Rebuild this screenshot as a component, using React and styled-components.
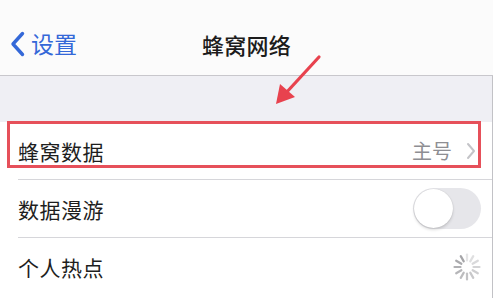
import React from 'react';
import styled, { createGlobalStyle } from 'styled-components';

const GlobalStyle = createGlobalStyle`
  html, body {
    margin: 0;
    padding: 0;
    background: #ffffff;
  }
  body {
    font-family: "Noto Sans CJK SC", "Noto Sans", sans-serif;
  }
`;

const Screen = styled.div`
  position: relative;
  width: 493px;
  height: 298px;
  overflow: hidden;
  background: #ffffff;
  display: flex;
  flex-direction: column;
`;

const NavBar = styled.div`
  height: 63px;
  padding-top: 12px;
  display: grid;
  grid-template-columns: 1fr auto 1fr;
  align-items: center;
  border-bottom: 1px solid #c8c7cc;
  background: #fbfbfb;
`;

const BackButton = styled.div`
  display: flex;
  align-items: center;
  gap: 6px;
  padding-left: 10px;
  color: #3468d8;
  font-size: 23px;
  line-height: 1;
`;

const Title = styled.div`
  font-size: 22px;
  font-weight: 500;
  color: #1c1c1c;
  letter-spacing: 0.3px;
`;

const Body = styled.div`
  flex: 1;
  display: flex;
  flex-direction: column;
  border-right: 1px solid #c2c2c6;
`;

const SectionGap = styled.div`
  height: 46px;
  background: #efeff4;
`;

const Row = styled.div`
  height: 58px;
  padding-left: 18px;
  display: flex;
  background: #ffffff;
`;

const RowInner = styled.div`
  flex: 1;
  display: flex;
  align-items: center;
  justify-content: space-between;
  padding-right: ${p => p.$pr || 12}px;
  border-bottom: ${p => (p.$last ? 'none' : '1px solid #d6d6da')};
`;

const Label = styled.div`
  font-size: 21px;
  color: #1e1e1e;
  letter-spacing: 0.5px;
`;

const Detail = styled.div`
  display: flex;
  align-items: center;
  gap: 14px;
  color: #8e8e93;
  font-size: 20px;
`;

const Toggle = styled.div`
  position: relative;
  width: 68px;
  height: 41px;
  border-radius: 21px;
  background: #e6e6ea;
`;

const Knob = styled.div`
  position: absolute;
  left: 1px;
  top: 1px;
  width: 39px;
  height: 39px;
  border-radius: 50%;
  background: #ffffff;
  box-shadow: 0 2px 3px rgba(0, 0, 0, 0.14), 0 0 1px rgba(0, 0, 0, 0.2);
`;

const Highlight = styled.div`
  position: absolute;
  left: 7px;
  top: 121px;
  width: 468px;
  height: 41px;
  border: 3px solid #e6505a;
  pointer-events: none;
`;

const Arrow = styled.svg`
  position: absolute;
  left: 268px;
  top: 52px;
`;

const Spinner = () => {
  const spokes = Array.from({ length: 12 }, (_, i) => i);
  return (
    <svg width="28" height="28" viewBox="-14 -14 28 28">
      {spokes.map(i => (
        <line
          key={i}
          x1="0"
          y1="-6.5"
          x2="0"
          y2="-12.5"
          stroke="#9a9a9e"
          strokeWidth="2.2"
          strokeLinecap="round"
          opacity={0.25 + (i / 12) * 0.7}
          transform={`rotate(${i * 30})`}
        />
      ))}
    </svg>
  );
};

const App = () => (
  <>
    <GlobalStyle />
    <Screen>
      <NavBar>
        <BackButton>
          <svg width="15" height="26" viewBox="0 0 15 26">
            <polyline
              points="12.5,2.5 3,13 12.5,23.5"
              fill="none"
              stroke="#3468d8"
              strokeWidth="3.4"
              strokeLinecap="round"
              strokeLinejoin="round"
            />
          </svg>
          <span>设置</span>
        </BackButton>
        <Title>蜂窝网络</Title>
        <div />
      </NavBar>
      <Body>
        <SectionGap />
        <Row>
          <RowInner $pr={16}>
            <Label>蜂窝数据</Label>
            <Detail>
              <span>主号</span>
              <svg width="10" height="18" viewBox="0 0 10 18">
                <polyline
                  points="2,2 8,9 2,16"
                  fill="none"
                  stroke="#c4c4c8"
                  strokeWidth="2"
                  strokeLinecap="round"
                  strokeLinejoin="round"
                />
              </svg>
            </Detail>
          </RowInner>
        </Row>
        <Row>
          <RowInner $pr={11}>
            <Label>数据漫游</Label>
            <Toggle>
              <Knob />
            </Toggle>
          </RowInner>
        </Row>
        <Row>
          <RowInner $pr={11} $last>
            <Label>个人热点</Label>
            <Spinner />
          </RowInner>
        </Row>
      </Body>
      <Highlight />
      <Arrow width="56" height="56" viewBox="0 0 56 56">
        <line x1="51" y1="5" x2="17" y2="42" stroke="#e8424e" strokeWidth="3.2" strokeLinecap="round" />
        <polygon points="8,52 12,32 27,45" fill="#e8424e" />
      </Arrow>
    </Screen>
  </>
);

export default App;
